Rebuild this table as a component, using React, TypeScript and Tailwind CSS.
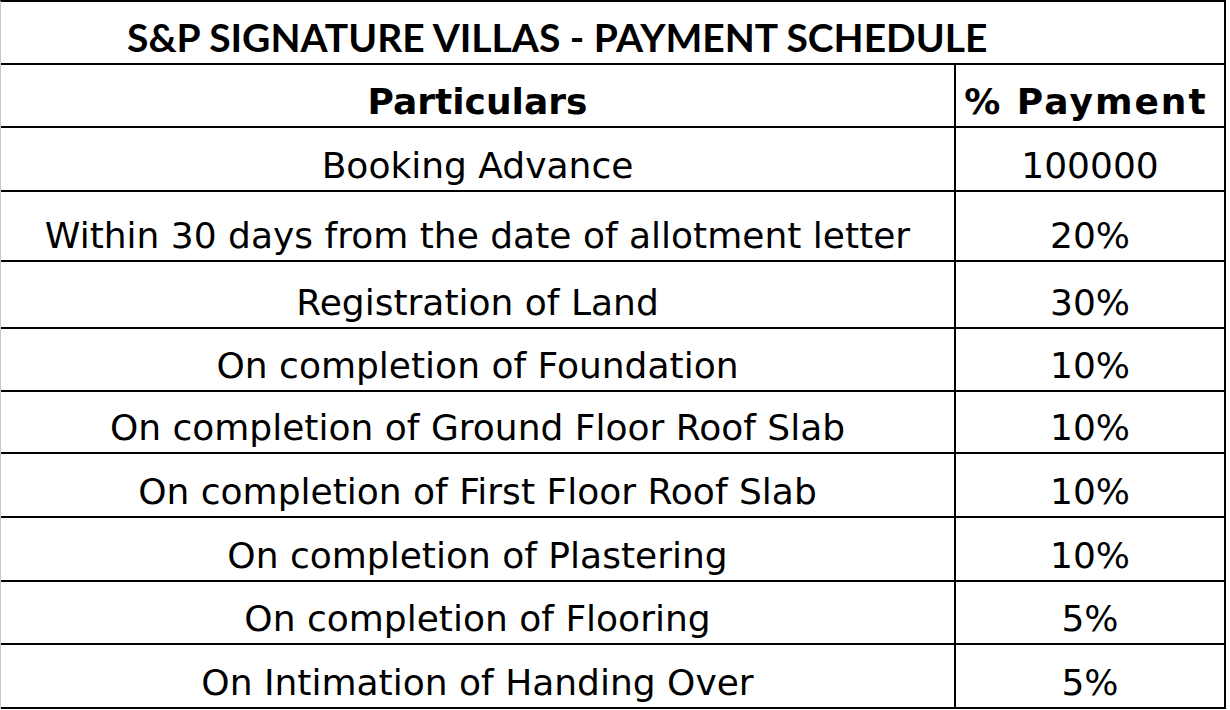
import React from 'react';

const rows = [
  { label: 'Booking Advance', value: '100000', h: 'h-[64px]' },
  { label: 'Within 30 days from the date of allotment letter', value: '20%', h: 'h-[70px]' },
  { label: 'Registration of Land', value: '30%', h: 'h-[67px]' },
  { label: 'On completion of Foundation', value: '10%', h: 'h-[63px]' },
  { label: 'On completion of Ground Floor Roof Slab', value: '10%', h: 'h-[62px]' },
  { label: 'On completion of First Floor Roof Slab', value: '10%', h: 'h-[64px]' },
  { label: 'On completion of Plastering', value: '10%', h: 'h-[64px]' },
  { label: 'On completion of Flooring', value: '5%', h: 'h-[63px]' },
  { label: 'On Intimation of Handing Over', value: '5%', h: 'h-[64px]' },
];

const body = "font-[family-name:'DejaVu_Sans',sans-serif]";

export default function App() {
  return (
    <div className="w-[1230px] h-[710px] bg-white text-black overflow-hidden">
      <div className="w-[1226px] border-t-2 border-r-2 border-l border-t-black border-r-black border-l-[#c8c8c8]">
        {/* title */}
        <div className="h-[63px] border-b-2 border-black flex items-end pl-[126px] pb-[6px]">
          <span className="font-[family-name:'Lato',sans-serif] font-bold text-[39px] leading-none whitespace-nowrap">
            S&amp;P SIGNATURE VILLAS - PAYMENT SCHEDULE
          </span>
        </div>

        {/* header */}
        <div className={`h-[63px] border-b-2 border-black flex ${body} font-bold text-[36px] leading-none`}>
          <div className="w-[955px] border-r-2 border-black flex items-end justify-center pb-[6px]">
            Particulars
          </div>
          <div className="flex-1 flex items-end justify-center pb-[6px] pr-[8px] tracking-[2px] whitespace-nowrap">
            % Payment
          </div>
        </div>

        {rows.map((r) => (
          <div
            key={r.label}
            className={`${r.h} border-b-2 border-black flex ${body} text-[36px] leading-none`}
          >
            <div className="w-[955px] border-r-2 border-black flex items-end justify-center pb-[6px] whitespace-nowrap">
              {r.label}
            </div>
            <div className="flex-1 flex items-end justify-center pb-[6px]">{r.value}</div>
          </div>
        ))}
      </div>
    </div>
  );
}
